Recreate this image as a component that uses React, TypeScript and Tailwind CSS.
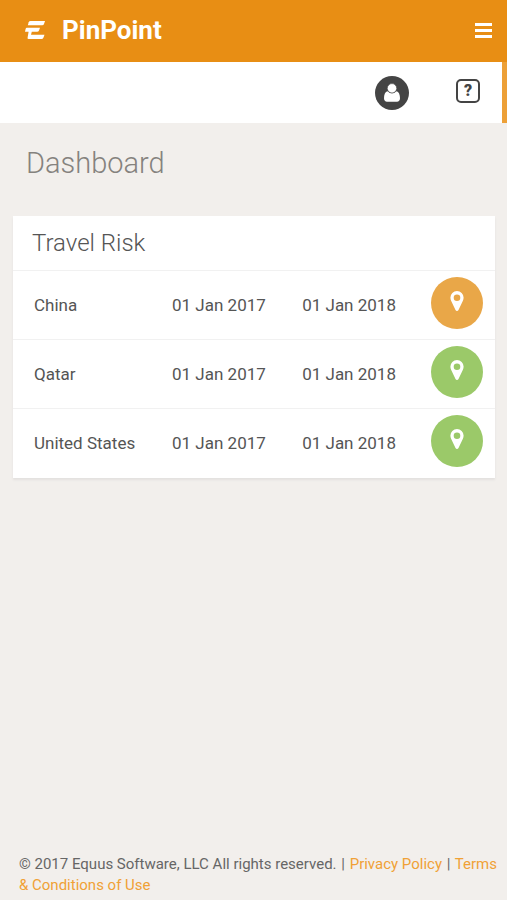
type Level = "medium" | "low";

interface Trip {
  country: string;
  from: string;
  to: string;
  level: Level;
}

const trips: Trip[] = [
  { country: "China", from: "01 Jan 2017", to: "01 Jan 2018", level: "medium" },
  { country: "Qatar", from: "01 Jan 2017", to: "01 Jan 2018", level: "low" },
  { country: "United States", from: "01 Jan 2017", to: "01 Jan 2018", level: "low" },
];

const levelColor: Record<Level, string> = {
  medium: "bg-[#e9a748]",
  low: "bg-[#9bc969]",
};

function Logo() {
  return (
    <svg viewBox="0 0 20 18" className="h-[18px] w-5" fill="currentColor" aria-hidden="true">
      <path d="M5.500 0H20l-1 2.900q-.5 1.400-1.800 1.400H2.800L3.700 1.300Q4.100 0 5.500 0Z" />
      <path d="M1.800 6.800H15l-1 2.700q-.5 1.300-1.800 1.300H6.800L6 13.700H19.500l-1.100 3Q17.800 18 16.500 18H3.600q-1.400 0-1-1.500L3.600 10.800H0L.6 8Q.9 6.800 1.800 6.800Z" />
    </svg>
  );
}

function Header() {
  return (
    <header className="flex h-[62px] items-center justify-between bg-[#e88e14] pr-[15px] pb-0.5 pl-[25px] text-white">
      <a href="#" className="flex items-center gap-[17px] text-[26px] leading-8 font-bold">
        <Logo />
        PinPoint
      </a>
      <button type="button" aria-label="Menu" className="flex w-[17px] flex-col gap-[3px]">
        <span className="h-[3px] w-full bg-white" />
        <span className="h-[3px] w-full bg-white" />
        <span className="h-[3px] w-full bg-white" />
      </button>
    </header>
  );
}

function Toolbar() {
  return (
    <div className="flex h-[61px] items-center justify-end gap-[47px] border-r-[5px] border-[#eda037] bg-white pr-[22px]">
      <button type="button" aria-label="Account" className="mt-px">
        <svg viewBox="0 0 34 34" className="size-[34px]" aria-hidden="true">
          <circle cx="17" cy="17" r="17" fill="#444" />
          <path
            d="M12.500 15.300C10.200 16 9 18.500 9 22.300 9 24.500 10.300 25.700 12 25.700H22C23.700 25.700 25 24.500 25 22.300 25 18.500 23.800 16 21.500 15.300Q19.600 17.200 17 17.200T12.500 15.300Z"
            fill="#fff"
          />
          <circle cx="17" cy="12.300" r="4.700" fill="#fff" stroke="#444" strokeWidth=".6" />
        </svg>
      </button>
      <button
        type="button"
        aria-label="Help"
        className="mb-1 flex size-6 items-center justify-center rounded-[5px] border-2 border-[#444] text-base font-black text-[#444]"
      >
        ?
      </button>
    </div>
  );
}

function Pin() {
  return (
    <svg viewBox="0 0 14 20" className="h-5 w-3.5" fill="currentColor" aria-hidden="true">
      <path
        fillRule="evenodd"
        d="M7 0a6.600 6.600 0 0 1 6.600 6.600c0 1.300-.3 2.300-.7 3.200L8.500 19q-.5 1-1.500 1t-1.500-1L1.100 9.800C.7 8.900.4 7.900.4 6.600A6.600 6.600 0 0 1 7 0Zm0 3.400a3.300 3.300 0 1 0 0 6.600 3.300 3.300 0 0 0 0-6.600Z"
      />
    </svg>
  );
}

function TravelRisk() {
  return (
    <section className="mr-3 ml-[13px] bg-white shadow-[0_2px_2px_#e3e1df]">
      <h2 className="h-[54px] px-[19px] pt-[11px] text-2xl leading-8 font-light text-[#555]">Travel Risk</h2>
      <table className="w-full table-fixed text-left text-[17px] leading-6 text-[#555]">
        <colgroup>
          <col className="w-[33%]" />
          <col className="w-[27%]" />
          <col />
          <col className="w-16" />
        </colgroup>
        <tbody>
          {trips.map((trip) => (
            <tr key={trip.country} className="h-[69px] border-t border-[#f1f1f1]">
              <th scope="row" className="pl-[21px] font-normal">{trip.country}</th>
              <td>{trip.from}</td>
              <td>{trip.to}</td>
              <td className="pb-1">
                <button
                  type="button"
                  aria-label={`Show ${trip.country} on map`}
                  className={`flex size-[52px] items-center justify-center rounded-full pb-1 text-white ${levelColor[trip.level]}`}
                >
                  <Pin />
                </button>
              </td>
            </tr>
          ))}
        </tbody>
      </table>
    </section>
  );
}

export default function App() {
  return (
    <div className="flex min-h-screen flex-col bg-[#f2efec] font-[Roboto,sans-serif]">
      <Header />
      <Toolbar />
      <main className="flex-1">
        <h1 className="px-[26px] pt-5 pb-[33px] text-[29px] leading-10 font-light text-[#85827e]">Dashboard</h1>
        <TravelRisk />
      </main>
      <footer className="pr-2 pb-1 pl-[19px] text-[15px] leading-[21px] text-[#666]">
        © 2017 Equus Software, LLC All rights reserved. <span className="mx-px">|</span>{" "}
        <a href="#" className="text-[#f0a136]">Privacy Policy</a> <span className="mx-px">|</span>{" "}
        <a href="#" className="text-[#f0a136]">Terms &amp; Conditions of Use</a>
      </footer>
    </div>
  );
}
